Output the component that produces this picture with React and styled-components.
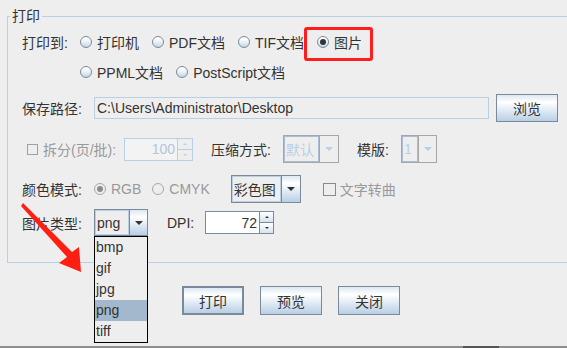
import React from 'react';
import styled, { createGlobalStyle, css } from 'styled-components';

const GlobalStyle = createGlobalStyle`
  html, body {
    margin: 0;
    padding: 0;
    background: #eeeeee;
  }
  body {
    font-family: "Liberation Sans", "Noto Sans CJK SC", sans-serif;
    font-size: 14px;
    color: #333333;
  }
`;

const Window = styled.div`
  position: relative;
  width: 567px;
  height: 348px;
  overflow: hidden;
  display: flex;
  flex-direction: column;
  background: #eeeeee;
`;

const Group = styled.fieldset`
  flex: none;
  margin: 7px 0 0 7px;
  padding: 4px 0 26px 2px;
  width: 600px;
  min-width: 0;
  box-sizing: border-box;
  border: 1px solid #b8cfe5;
`;

const Legend = styled.legend`
  padding: 0 2px;
  line-height: 18px;
  color: #333333;
`;

const Body = styled.div`
  display: flex;
  flex-direction: column;
  padding-left: 12px;
`;

const Row = styled.div`
  display: flex;
  align-items: center;
  height: ${p => p.$h}px;
  margin-top: ${p => p.$top || 0}px;
  padding-left: ${p => p.$indent || 0}px;
`;

const Label = styled.span`
  flex: none;
  width: ${p => p.$w}px;
  margin-left: ${p => p.$ml || 0}px;
  white-space: nowrap;
  color: ${p => (p.$disabled ? '#999999' : '#333333')};
`;

/* radio buttons */
const RadioGroup = styled.div`
  display: flex;
  align-items: center;
  gap: ${p => p.$gap || 13}px;
`;

const RadioItem = styled.label`
  position: relative;
  display: inline-flex;
  align-items: center;
  gap: 5px;
  height: 20px;
  white-space: nowrap;
  color: ${p => (p.$disabled ? '#999999' : '#333333')};
  ${p => p.$marked && css`
    &::after {
      content: '';
      position: absolute;
      top: -5px;
      bottom: -9px;
      left: -13px;
      right: -11px;
      border: 3px solid #ff1e1e;
      border-radius: 3px;
    }
  `}
`;

const RadioDot = styled.span`
  flex: none;
  width: 12px;
  height: 12px;
  box-sizing: border-box;
  border-radius: 50%;
  border: 1px solid ${p => (p.$disabled ? '#a8a8a8' : '#7a8a99')};
  background: ${p => (p.$disabled ? '#eeeeee' : 'linear-gradient(#ffffff 20%, #c6d5e5)')};
  display: flex;
  align-items: center;
  justify-content: center;
  &::before {
    content: '';
    display: ${p => (p.$checked ? 'block' : 'none')};
    width: 6px;
    height: 6px;
    border-radius: 50%;
    background: ${p => (p.$disabled ? '#8c8c8c' : '#333333')};
  }
`;

/* checkbox */
const CheckItem = styled.label`
  display: inline-flex;
  align-items: center;
  gap: ${p => p.$gap || 5}px;
  margin-left: ${p => p.$ml || 0}px;
  white-space: nowrap;
`;

const CheckBox = styled.span`
  flex: none;
  width: ${p => p.$size}px;
  height: ${p => p.$size}px;
  box-sizing: border-box;
  border: 1px solid ${p => p.$color};
  background: #eeeeee;
`;

/* text field and buttons */
const PathField = styled.div`
  width: 395px;
  height: 22px;
  box-sizing: border-box;
  border: 1px solid #b8cfe5;
  background: #eeeeee;
  padding-left: 2px;
  display: flex;
  align-items: center;
  white-space: nowrap;
  overflow: hidden;
`;

const Button = styled.button`
  flex: none;
  width: 62px;
  height: ${p => p.$h || 29}px;
  margin-left: ${p => p.$ml || 0}px;
  box-sizing: border-box;
  padding: 0;
  border: ${p => (p.$default ? 2 : 1)}px solid #7a8a99;
  border-radius: 0;
  background: linear-gradient(to bottom, #dde8f3 0%, #ffffff 28%, #b8cfe5 100%);
  font: inherit;
  color: #333333;
`;

/* spinner */
const Spinner = styled.div`
  flex: none;
  display: flex;
  height: 23px;
`;

const SpinField = styled.div`
  width: ${p => p.$w}px;
  box-sizing: border-box;
  border: 1px solid ${p => (p.$disabled ? '#b8cfe5' : '#7a8a99')};
  border-right: none;
  background: ${p => (p.$disabled ? '#f3f3f3' : '#ffffff')};
  color: ${p => (p.$disabled ? '#b3c6da' : '#333333')};
  display: flex;
  align-items: center;
  justify-content: flex-end;
  padding-right: 2px;
`;

const SpinButtons = styled.div`
  width: ${p => p.$w}px;
  display: flex;
  flex-direction: column;
`;

const SpinButton = styled.div`
  flex: 1;
  box-sizing: border-box;
  border: 1px solid ${p => (p.$disabled ? '#b8cfe5' : '#7a8a99')};
  & + & {
    border-top: none;
  }
  background: ${p => (p.$disabled ? '#eeeeee' : 'linear-gradient(#ffffff, #d7e2ee)')};
  display: flex;
  align-items: center;
  justify-content: center;
`;

const TinyArrow = styled.span`
  width: 0;
  height: 0;
  border-left: 2px solid transparent;
  border-right: 2px solid transparent;
  ${p => (p.$up ? 'border-bottom' : 'border-top')}: 2px solid ${p => (p.$disabled ? '#b8cfe5' : '#333333')};
`;

/* combo box */
const Combo = styled.div`
  position: relative;
  flex: none;
  display: flex;
  height: ${p => p.$h || 28}px;
  margin-left: ${p => p.$ml || 0}px;
  box-sizing: border-box;
  border: 1px solid ${p => (p.$disabled ? '#a6a6a6' : '#7a8a99')};
`;

const ComboValue = styled.div`
  width: ${p => p.$w}px;
  box-sizing: border-box;
  border: 1px solid ${p => (p.$disabled ? '#a9bed4' : '#b8cfe5')};
  background: #eeeeee;
  color: ${p => (p.$disabled ? '#b8cfe5' : '#333333')};
  padding-left: 1px;
  display: flex;
  align-items: center;
  overflow: hidden;
  white-space: nowrap;
`;

const ComboArrow = styled.div`
  width: ${p => p.$w}px;
  box-sizing: border-box;
  border-left: 1px solid ${p => (p.$disabled ? '#a6a6a6' : '#7a8a99')};
  background: ${p => (p.$disabled ? '#eeeeee' : 'linear-gradient(to bottom, #dde8f3 0%, #ffffff 28%, #b8cfe5 100%)')};
  display: flex;
  align-items: center;
  justify-content: center;
`;

const Caret = styled.span`
  width: 0;
  height: 0;
  border-left: 4px solid transparent;
  border-right: 4px solid transparent;
  border-top: 4px solid ${p => (p.$disabled ? '#b8cfe5' : '#333333')};
`;

const Popup = styled.ul`
  position: absolute;
  top: calc(100% + 1px);
  left: -1px;
  z-index: 2;
  width: 54px;
  margin: 0;
  padding: 0;
  list-style: none;
  box-sizing: border-box;
  border: 1px solid #000000;
  background: #eeeeee;
`;

const Option = styled.li`
  height: 21px;
  line-height: 21px;
  padding-left: 1px;
  background: ${p => (p.$selected ? '#a3b8cc' : 'transparent')};
`;

/* footer */
const ButtonBar = styled.div`
  display: flex;
  gap: 16px;
  margin-top: 23px;
  padding-left: 182px;
`;

const WindowEdge = styled.div`
  margin-top: auto;
  height: 2px;
  display: flex;
  background: #8e8e8e;
`;

const EdgeThumb = styled.span`
  margin-left: 463px;
  width: 36px;
  background: #555555;
`;

const Annotation = styled.svg`
  position: absolute;
  left: 0;
  top: 0;
  pointer-events: none;
`;

const Radio = ({ checked, disabled, marked, children }) => (
  <RadioItem $disabled={disabled} $marked={marked}>
    <RadioDot $checked={checked} $disabled={disabled} />
    {children}
  </RadioItem>
);

const NumberSpinner = ({ value, field, buttons, disabled }) => (
  <Spinner>
    <SpinField $w={field} $disabled={disabled}>{value}</SpinField>
    <SpinButtons $w={buttons}>
      <SpinButton $disabled={disabled}><TinyArrow $up $disabled={disabled} /></SpinButton>
      <SpinButton $disabled={disabled}><TinyArrow $disabled={disabled} /></SpinButton>
    </SpinButtons>
  </Spinner>
);

const formats = ['bmp', 'gif', 'jpg', 'png', 'tiff'];

export default function App() {
  return (
    <Window>
      <GlobalStyle />
      <Group>
        <Legend>打印</Legend>
        <Body>
          <Row $h={26}>
            <Label $w={58}>打印到:</Label>
            <RadioGroup>
              <Radio>打印机</Radio>
              <Radio>PDF文档</Radio>
              <Radio>TIF文档</Radio>
              <Radio checked marked>图片</Radio>
            </RadioGroup>
          </Row>
          <Row $h={26} $top={4} $indent={58}>
            <RadioGroup>
              <Radio>PPML文档</Radio>
              <Radio>PostScript文档</Radio>
            </RadioGroup>
          </Row>
          <Row $h={28} $top={9}>
            <Label $w={72}>保存路径:</Label>
            <PathField>C:\Users\Administrator\Desktop</PathField>
            <Button $ml={7} $h={28}>浏览</Button>
          </Row>
          <Row $h={28} $top={13}>
            <CheckItem $ml={5}>
              <CheckBox $size={11} $color="#a0a0a0" />
              <Label $w={81} $disabled>拆分(页/批):</Label>
            </CheckItem>
            <NumberSpinner value="100" field={53} buttons={16} disabled />
            <Label $w={72} $ml={18}>压缩方式:</Label>
            <Combo $disabled>
              <ComboValue $w={35} $disabled>默认</ComboValue>
              <ComboArrow $w={19} $disabled><Caret $disabled /></ComboArrow>
            </Combo>
            <Label $w={44} $ml={18}>模版:</Label>
            <Combo $disabled>
              <ComboValue $w={16} $disabled>1</ComboValue>
              <ComboArrow $w={18} $disabled><Caret $disabled /></ComboArrow>
            </Combo>
          </Row>
          <Row $h={28} $top={12}>
            <Label $w={72}>颜色模式:</Label>
            <RadioGroup $gap={11}>
              <Radio checked disabled>RGB</Radio>
              <Radio disabled>CMYK</Radio>
            </RadioGroup>
            <Combo $ml={21}>
              <ComboValue $w={49}>彩色图</ComboValue>
              <ComboArrow $w={19}><Caret /></ComboArrow>
            </Combo>
            <CheckItem $ml={22} $gap={4}>
              <CheckBox $size={13} $color="#8a8a8a" />
              <Label $disabled>文字转曲</Label>
            </CheckItem>
          </Row>
          <Row $h={27} $top={6}>
            <Label $w={72}>图片类型:</Label>
            <Combo $h={27}>
              <ComboValue $w={34}>png</ComboValue>
              <ComboArrow $w={18}><Caret /></ComboArrow>
              <Popup>
                {formats.map(f => (
                  <Option key={f} $selected={f === 'png'}>{f}</Option>
                ))}
              </Popup>
            </Combo>
            <Label $w={38} $ml={19}>DPI:</Label>
            <NumberSpinner value="72" field={54} buttons={15} />
          </Row>
        </Body>
      </Group>
      <ButtonBar>
        <Button $default>打印</Button>
        <Button>预览</Button>
        <Button>关闭</Button>
      </ButtonBar>
      <WindowEdge>
        <EdgeThumb />
      </WindowEdge>
      <Annotation width="567" height="348" viewBox="0 0 567 348">
        <polygon
          points="21,206 23,203 72,252 79,247 81,272 59,263 67,257"
          fill="#ff1e12"
        />
      </Annotation>
    </Window>
  );
}
